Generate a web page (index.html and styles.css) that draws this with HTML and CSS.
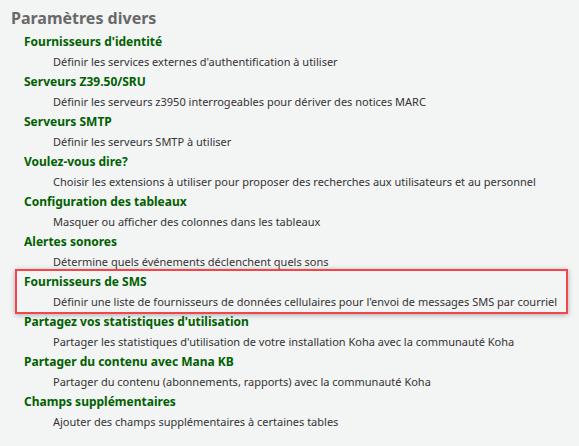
FILE: index.html
```html
<!DOCTYPE html>
<html lang="fr">
<head>
  <meta charset="UTF-8" />
  <title>Paramètres divers</title>
  <link rel="stylesheet" href="styles.css">
</head>
<body>
  <div class="section">
    <h3>Paramètres divers</h3>
    <dl>
      <dt><a href="#">Fournisseurs d'identité</a></dt>
      <dd>Définir les services externes d'authentification à utiliser</dd>
      <dt><a href="#">Serveurs Z39.50/SRU</a></dt>
      <dd>Définir les serveurs z3950 interrogeables pour dériver des notices MARC</dd>
      <dt><a href="#">Serveurs SMTP</a></dt>
      <dd>Définir les serveurs SMTP à utiliser</dd>
      <dt><a href="#">Voulez-vous dire?</a></dt>
      <dd>Choisir les extensions à utiliser pour proposer des recherches aux utilisateurs et au personnel</dd>
      <dt><a href="#">Configuration des tableaux</a></dt>
      <dd>Masquer ou afficher des colonnes dans les tableaux</dd>
      <dt><a href="#">Alertes sonores</a></dt>
      <dd>Détermine quels événements déclenchent quels sons</dd>
    </dl>
    <!-- highlighted entry -->
    <dl class="highlight">
      <dt><a href="#">Fournisseurs de SMS</a></dt>
      <dd>Définir une liste de fournisseurs de données cellulaires pour l'envoi de messages SMS par courriel</dd>
    </dl>
    <dl>
      <dt><a href="#">Partagez vos statistiques d'utilisation</a></dt>
      <dd>Partager les statistiques d'utilisation de votre installation Koha avec la communauté Koha</dd>
      <dt><a href="#">Partager du contenu avec Mana KB</a></dt>
      <dd>Partager du contenu (abonnements, rapports) avec la communauté Koha</dd>
      <dt><a href="#">Champs supplémentaires</a></dt>
      <dd>Ajouter des champs supplémentaires à certaines tables</dd>
    </dl>
  </div>
</body>
</html>
```

FILE: styles.css
```css
body {
  margin: 0;
  background: #f3f4f4;
  font-family: 'Noto Sans', sans-serif;
  color: #333;
}
.section {
  padding: 6px 0 0 11px;
}
h3 {
  margin: 0 0 2px 0;
  font-size: 16px;
  line-height: 24px;
  font-weight: bold;
  color: #696969;
}
dl {
  margin: 0;
  padding-left: 13px;
}
dt {
  line-height: 20px;
  font-size: 12px;
}
dt a {
  color: #006100;
  font-weight: bold;
  text-decoration: none;
}
dd {
  margin: 0 0 0 29px;
  line-height: 20px;
  font-size: 11px;
  color: #333;
  white-space: nowrap;
}
.highlight {
  margin: -3px 11px -2px 4px;
  padding: 1px 0 0 7px;
  border: 2px solid #f2454c;
  box-shadow: 0 1px 5px rgba(0, 0, 0, 0.3);
}
```
